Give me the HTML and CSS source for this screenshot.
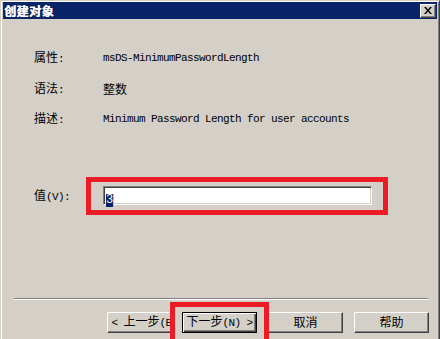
FILE: index.html
```html
<!DOCTYPE html>
<html lang="zh-CN">
<head>
    <meta charset="UTF-8">
    <title>创建对象</title>
    <link rel="stylesheet" href="styles.css">
</head>
<body>
    <div class="dialog">
        <div class="titlebar">
            <span class="title">创建对象</span>
            <button class="close-btn">
                <svg width="8" height="7" viewBox="0 0 8 7">
                    <path d="M0 0h2l2 2.5L6 0h2L5 3.5 8 7H6L4 4.5 2 7H0l3-3.5z" fill="#000"/>
                </svg>
            </button>
        </div>

        <div class="content">
            <div class="info-row">
                <span class="label">属性<span class="half">:</span></span>
                <span class="value mono">msDS-MinimumPasswordLength</span>
            </div>
            <div class="info-row">
                <span class="label">语法<span class="half">:</span></span>
                <span class="value">整数</span>
            </div>
            <div class="info-row">
                <span class="label">描述<span class="half">:</span></span>
                <span class="value mono">Minimum Password Length for user accounts</span>
            </div>

            <div class="value-row">
                <span class="label">值<span class="half">(V):</span></span>
                <div class="mark">
                    <div class="edit"><span class="sel">3</span></div>
                </div>
            </div>
        </div>

        <div class="separator"></div>

        <div class="buttons">
            <button class="btn"><span class="half">&lt; </span>上一步<span class="half">(B)</span></button>
            <div class="mark mark-btn">
                <button class="btn btn-default">下一步<span class="half">(N) &gt;</span></button>
            </div>
            <button class="btn btn-cancel">取消</button>
            <button class="btn btn-help">帮助</button>
        </div>
    </div>
</body>
</html>
```

FILE: styles.css
```css
* {
    margin: 0;
    padding: 0;
    box-sizing: border-box;
}

body {
    width: 440px;
    height: 339px;
    overflow: hidden;
    background: #d4d0c8;
    font-family: "Noto Sans CJK SC", "DejaVu Sans", sans-serif;
    font-size: 12px;
    color: #000;
}

.dialog {
    width: 440px;
    height: 339px;
    background: #d4d0c8;
    border: 1px solid;
    border-bottom-width: 0;
    border-color: #d4d0c8 #404040 #404040 #d4d0c8;
    padding: 1px 1px 0 1px;
    box-shadow: inset 1px 1px #fff, inset -1px 0 #808080;
}

.titlebar {
    height: 17px;
    margin: 0 1px;
    background: #0a246a;
    display: flex;
    align-items: center;
    justify-content: space-between;
    padding: 0 1px;
}

.title {
    color: #fff;
    font-weight: bold;
    font-size: 12px;
    letter-spacing: 0.5px;
    line-height: 17px;
    text-shadow: 0.6px 0 #fff;
}

.close-btn {
    width: 16px;
    height: 14px;
    background: #d4d0c8;
    border: 1px solid;
    border-color: #fff #404040 #404040 #fff;
    box-shadow: inset -1px -1px #808080;
    display: flex;
    align-items: center;
    justify-content: center;
    padding-right: 1px;
}

.content {
    padding: 24px 0 0 32px;
}

.info-row {
    height: 30.5px;
    display: flex;
    align-items: center;
}

.label {
    width: 69px;
    line-height: 12px;
}

.value {
    line-height: 12px;
}

.mono,
.half {
    font-family: "Liberation Mono", monospace;
    font-size: 11px;
    letter-spacing: -0.6px;
}

.value-row {
    margin-top: 42px;
    display: flex;
    align-items: center;
}

.value-row .label {
    width: 52px;
}

.mark {
    border: 5px solid #ed1c24;
    background: #d4d0c8;
    padding: 4px 11px 5px 12px;
}

.edit {
    width: 269px;
    height: 19px;
    background: #fff;
    border: 1px solid;
    border-color: #808080 #fff #fff #808080;
    box-shadow: inset 1px 1px #404040, inset -1px -1px #d4d0c8;
    padding: 2px 0 0 2px;
}

.sel {
    display: inline-block;
    background: #0a246a;
    color: #fff;
    font-family: "Liberation Mono", monospace;
    font-size: 12px;
    line-height: 13px;
    width: 7px;
    text-align: center;
    border-right: 1px solid #e8c070;
    box-sizing: content-box;
}

.separator {
    margin: 83px 0 0 12px;
    width: 414px;
    height: 2px;
    border-top: 1px solid #808080;
    border-bottom: 1px solid #fff;
}

.buttons {
    display: flex;
    align-items: flex-start;
    padding: 2px 0 0 105px;
}

.btn {
    width: 75px;
    height: 21px;
    margin-top: 10px;
    background: #d4d0c8;
    border: 1px solid;
    border-color: #fff #404040 #404040 #fff;
    box-shadow: inset -1px -1px #808080;
    font-family: "Noto Sans CJK SC", "DejaVu Sans", sans-serif;
    font-size: 12px;
    line-height: 12px;
    color: #000;
    white-space: nowrap;
    overflow: hidden;
}

.mark-btn {
    position: relative;
    z-index: 1;
    margin-left: -12px;
    border-bottom: none;
    padding: 5px 7px 7px 7px;
}

.btn-default {
    margin-top: 0;
    border-color: #000;
    box-shadow: inset 1px 1px #fff, inset -1px -1px #404040, inset -2px -2px #808080;
}

.btn-cancel {
    margin-left: -1px;
}

.btn-help {
    margin-left: 11px;
}
```
